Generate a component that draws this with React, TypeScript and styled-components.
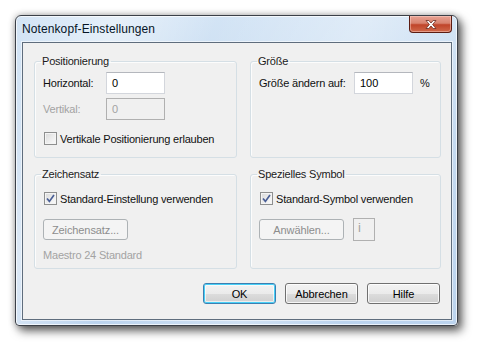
import React from "react";
import styled, { createGlobalStyle, css } from "styled-components";

const GlobalStyle = createGlobalStyle`
  html, body {
    margin: 0;
    padding: 0;
    background: #ffffff;
  }
  body {
    font-family: "Liberation Sans", Arial, sans-serif;
    font-size: 11px;
    color: #000;
  }
`;

const Page = styled.div`
  width: 485px;
  height: 353px;
  padding: 15px 0 0 15px;
  box-sizing: border-box;
`;

const Window = styled.div`
  width: 443px;
  height: 311px;
  box-sizing: border-box;
  display: flex;
  flex-direction: column;
  padding: 0 5px 5px 6px;
  border: 1px solid #3b4048;
  border-radius: 6px 6px 4px 4px;
  background:
    linear-gradient(112deg, rgba(255, 255, 255, 0) 0%, rgba(255, 255, 255, 0.45) 18%, rgba(255, 255, 255, 0) 36%, rgba(255, 255, 255, 0.3) 62%, rgba(255, 255, 255, 0) 80%),
    linear-gradient(to bottom, #d3e4f5 0%, #c5daf0 40%, #bcd4ee 100%);
  box-shadow:
    inset 0 0 0 1px rgba(255, 255, 255, 0.7),
    4px 5px 10px rgba(0, 0, 0, 0.6),
    0 0 7px rgba(0, 0, 0, 0.3);
`;

const TitleBar = styled.div`
  height: 26px;
  display: flex;
  align-items: flex-start;
  justify-content: space-between;
`;

const Title = styled.div`
  font-size: 12px;
  line-height: 27px;
  color: #061426;
  letter-spacing: 0.1px;
`;

const CloseButton = styled.div`
  width: 43px;
  height: 17px;
  box-sizing: border-box;
  display: flex;
  align-items: center;
  justify-content: center;
  border: 1px solid #5b1c12;
  border-top: none;
  border-radius: 0 0 4px 4px;
  background: linear-gradient(to bottom, #e8a294 0%, #d8836f 45%, #c0442a 55%, #d0694b 100%);
  box-shadow: inset 0 0 0 1px rgba(255, 220, 210, 0.45);
`;

const Client = styled.div`
  flex: 1;
  box-sizing: border-box;
  border: 1px solid #5f6d7d;
  background: #f0f0f0;
  box-shadow: 0 0 0 1px rgba(255, 255, 255, 0.55);
  padding: 12px 9px 0 11px;
  display: flex;
  flex-direction: column;
`;

const Groups = styled.div`
  display: grid;
  grid-template-columns: 203px 191px;
  grid-template-rows: 103px 101px;
  column-gap: 13px;
  row-gap: 10px;
`;

const Group = styled.fieldset`
  margin: 0;
  padding: 0 8px;
  min-width: 0;
  border: 1px solid #d5dfe5;
  border-radius: 3px;
  box-sizing: border-box;
  box-shadow: inset 1px 1px 0 #fcfcfc;
`;

const Legend = styled.legend`
  margin-left: -2px;
  padding: 0 2px 0 1px;
  line-height: 13px;
  font-size: 11px;
  letter-spacing: -0.2px;
  color: #1b1b1b;
`;

const FieldGrid = styled.div<{ $labelWidth: number }>`
  display: grid;
  grid-template-columns: ${(p) => p.$labelWidth}px 59px auto;
  column-gap: 0;
  row-gap: 4px;
  align-items: center;
  margin-top: 4px;
`;

const Label = styled.span<{ $disabled?: boolean }>`
  letter-spacing: -0.2px;
  color: ${(p) => (p.$disabled ? "#a3a3a3" : "#101010")};
  white-space: nowrap;
`;

const TextBox = styled.div<{ $disabled?: boolean }>`
  height: 22px;
  box-sizing: border-box;
  padding: 0 5px;
  display: flex;
  align-items: center;
  ${(p) =>
    p.$disabled
      ? css`
          border: 1px solid #b0b0b0;
          background: #f0f0f0;
          color: #a3a3a3;
        `
      : css`
          border: 1px solid #d3d6dc;
          border-top-color: #b4b7bd;
          background: #ffffff;
          color: #000;
        `}
`;

const Unit = styled.span`
  margin-left: 7px;
  color: #101010;
`;

const CheckRow = styled.label<{ $top: number }>`
  display: flex;
  align-items: center;
  gap: 3px;
  margin-top: ${(p) => p.$top}px;
  margin-left: 1px;
  letter-spacing: -0.2px;
  color: #101010;
  white-space: nowrap;
`;

const Box = styled.span`
  width: 13px;
  height: 13px;
  box-sizing: border-box;
  border: 1px solid #8e8f8f;
  background: linear-gradient(135deg, #d9d9d9 0%, #ededed 55%, #fbfbfb 100%);
  box-shadow: inset 0 0 0 1px #f4f4f4;
  display: flex;
  align-items: center;
  justify-content: center;
  flex: none;
`;

const ButtonRow = styled.div<{ $top: number }>`
  display: flex;
  align-items: center;
  gap: 9px;
  margin-top: ${(p) => p.$top}px;
`;

const PushButton = styled.div<{ $width: number; $variant?: "default" | "disabled" }>`
  width: ${(p) => p.$width}px;
  height: 21px;
  box-sizing: border-box;
  display: flex;
  align-items: center;
  justify-content: center;
  border-radius: 3px;
  letter-spacing: -0.1px;
  ${(p) =>
    p.$variant === "disabled"
      ? css`
          border: 1px solid #adb2b5;
          background: #f4f4f4;
          color: #8d8d8d;
        `
      : p.$variant === "default"
      ? css`
          border: 1px solid #3c7fb1;
          color: #000;
          background: linear-gradient(to bottom, #f2f2f2 0%, #ebebeb 50%, #dddddd 50%, #cfcfcf 100%);
          box-shadow: inset 0 0 0 1px #48d0f7, inset 0 0 0 2px rgba(255, 255, 255, 0.6);
        `
      : css`
          border: 1px solid #707070;
          background: linear-gradient(to bottom, #f2f2f2 0%, #ebebeb 50%, #dddddd 50%, #cfcfcf 100%);
          box-shadow: inset 0 0 0 1px rgba(255, 255, 255, 0.8);
          color: #000;
        `}
`;

const SymbolBox = styled.div`
  width: 22px;
  height: 23px;
  box-sizing: border-box;
  border: 1px solid #b0b0b0;
  padding: 2px 0 0 4px;
  color: #a3a3a3;
  font-size: 13px;
  line-height: 13px;
`;

const Note = styled.div`
  margin-top: 9px;
  color: #a3a3a3;
  letter-spacing: -0.2px;
`;

const Footer = styled.div`
  display: flex;
  justify-content: flex-end;
  gap: 9px;
  margin-top: 14px;
  padding-right: 2px;
`;

const CheckBox: React.FC<{ checked?: boolean; top: number; children: React.ReactNode }> = ({ checked, top, children }) => (
  <CheckRow $top={top}>
    <Box>
      {checked && (
        <svg width="9" height="9" viewBox="0 0 9 9">
          <path d="M1 4.5 L3.4 7.4 L8 1" fill="none" stroke="#4a5f96" strokeWidth="1.7" />
        </svg>
      )}
    </Box>
    {children}
  </CheckRow>
);

export default function App() {
  return (
    <Page>
      <GlobalStyle />
      <Window>
        <TitleBar>
          <Title>Notenkopf-Einstellungen</Title>
          <CloseButton>
            <svg width="14" height="11" viewBox="0 0 14 11">
              <path
                d="M2 1.5 L4.8 1.5 L7 4 L9.2 1.5 L12 1.5 L8.6 5.5 L12 9.5 L9.2 9.5 L7 7 L4.8 9.5 L2 9.5 L5.4 5.5 Z"
                fill="#ffffff"
                stroke="#6a2a20"
                strokeWidth="0.8"
              />
            </svg>
          </CloseButton>
        </TitleBar>
        <Client>
          <Groups>
            <Group>
              <Legend>Positionierung</Legend>
              <FieldGrid $labelWidth={63}>
                <Label>Horizontal:</Label>
                <TextBox>0</TextBox>
                <span />
                <Label $disabled>Vertikal:</Label>
                <TextBox $disabled>0</TextBox>
                <span />
              </FieldGrid>
              <CheckBox top={12}>Vertikale Positionierung erlauben</CheckBox>
            </Group>
            <Group>
              <Legend>Größe</Legend>
              <FieldGrid $labelWidth={95}>
                <Label>Größe ändern auf:</Label>
                <TextBox>100</TextBox>
                <Unit>%</Unit>
              </FieldGrid>
            </Group>
            <Group>
              <Legend>Zeichensatz</Legend>
              <CheckBox checked top={11}>
                Standard-Einstellung verwenden
              </CheckBox>
              <ButtonRow $top={14}>
                <PushButton $width={85} $variant="disabled">
                  Zeichensatz...
                </PushButton>
              </ButtonRow>
              <Note>Maestro 24 Standard</Note>
            </Group>
            <Group>
              <Legend>Spezielles Symbol</Legend>
              <CheckBox checked top={11}>
                Standard-Symbol verwenden
              </CheckBox>
              <ButtonRow $top={13}>
                <PushButton $width={85} $variant="disabled">
                  Anwählen...
                </PushButton>
                <SymbolBox>i</SymbolBox>
              </ButtonRow>
            </Group>
          </Groups>
          <Footer>
            <PushButton $width={73} $variant="default">
              OK
            </PushButton>
            <PushButton $width={73}>Abbrechen</PushButton>
            <PushButton $width={73}>Hilfe</PushButton>
          </Footer>
        </Client>
      </Window>
    </Page>
  );
}
